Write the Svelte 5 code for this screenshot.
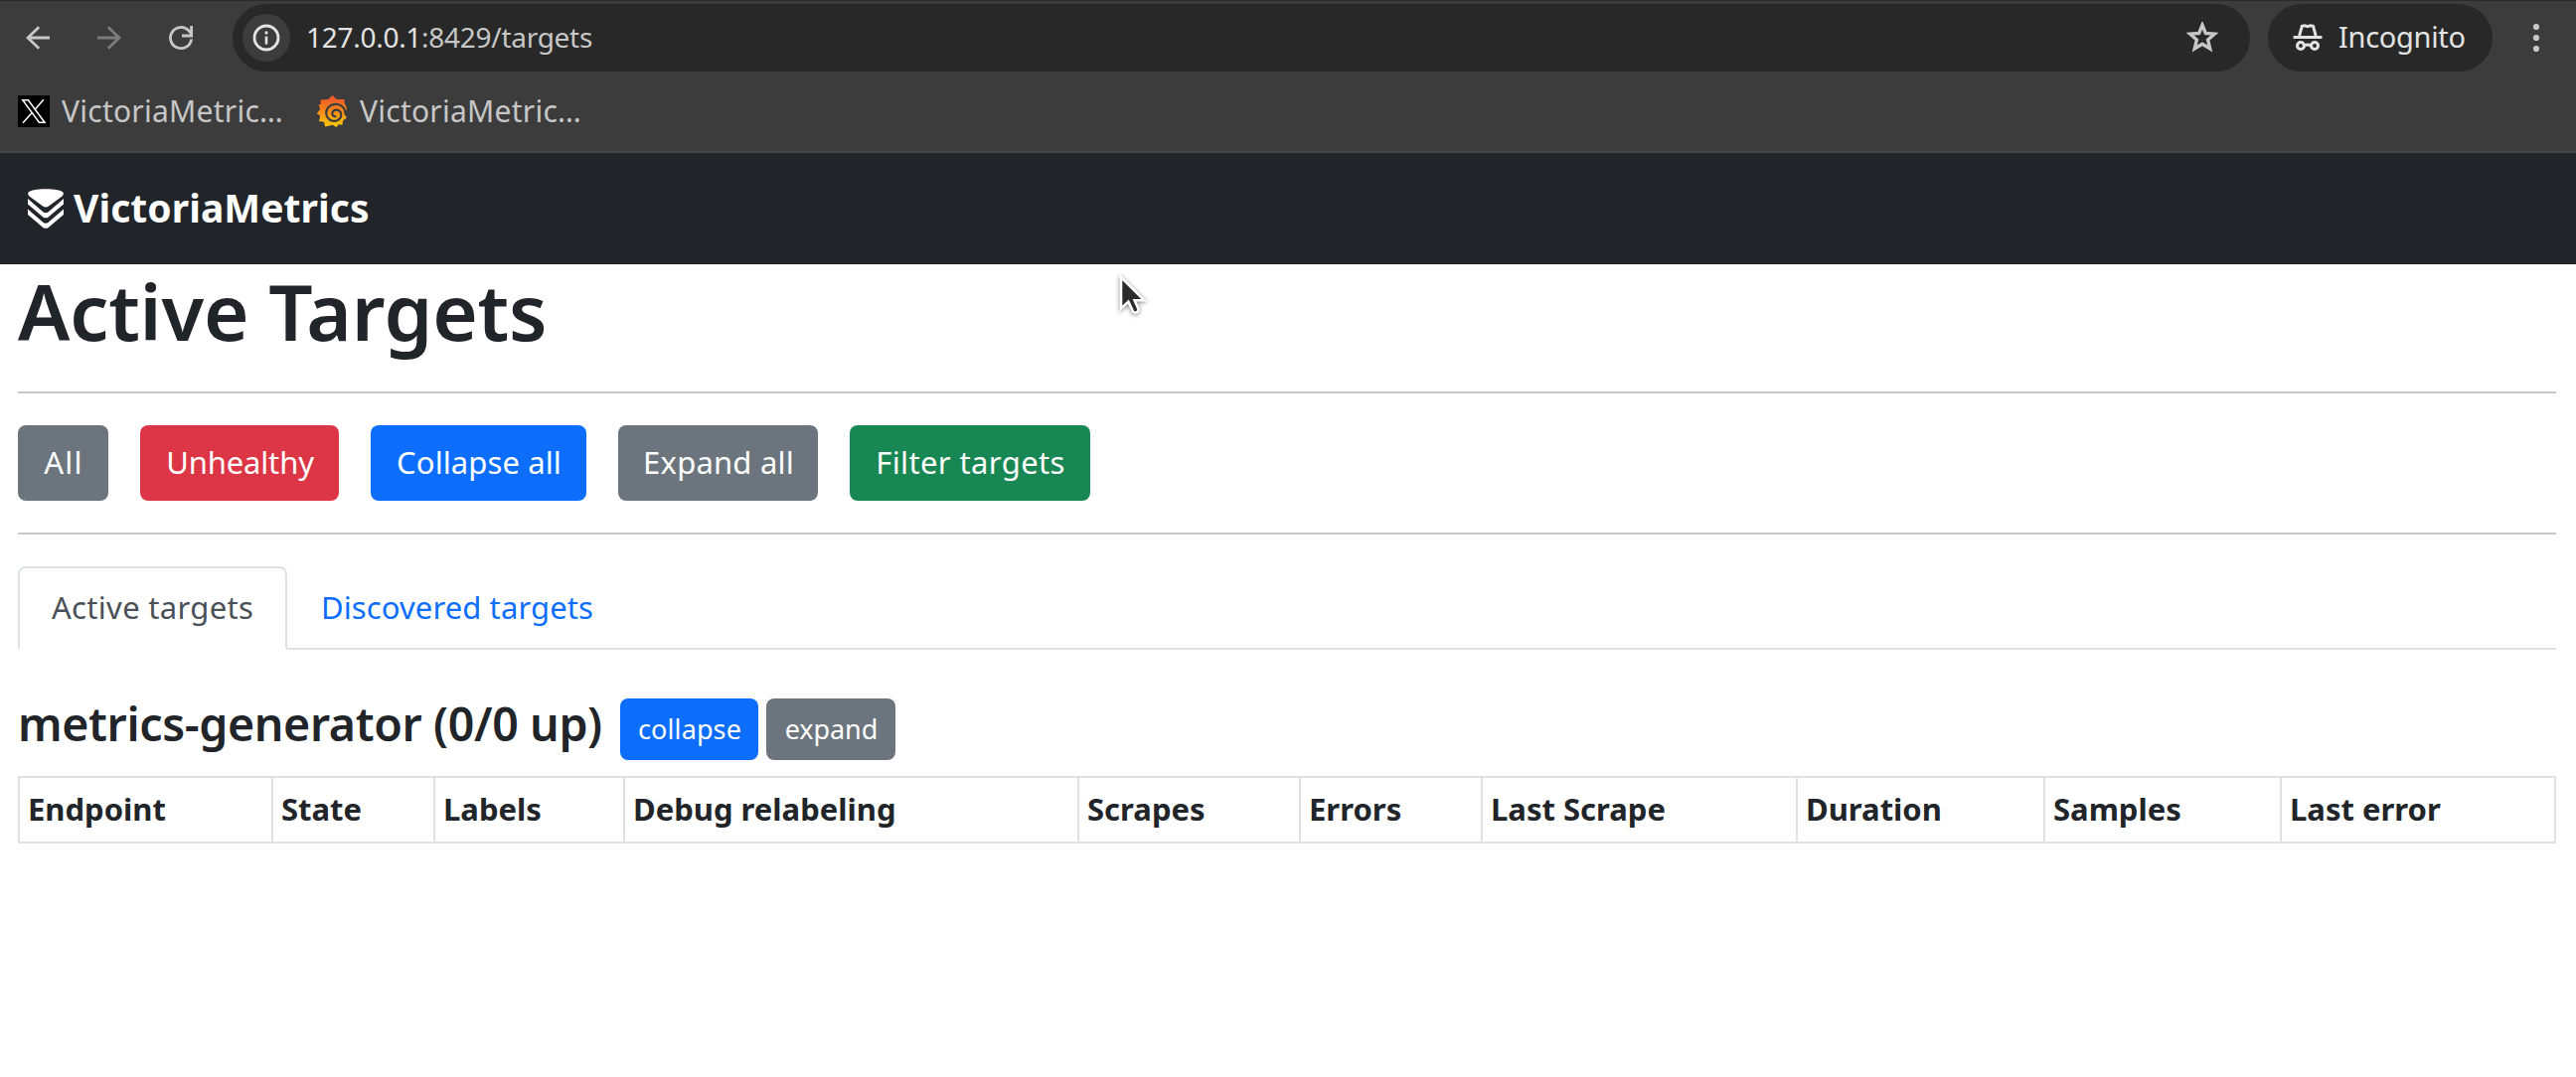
<script>
  const actions = [
    { label: 'All', kind: 'all' },
    { label: 'Unhealthy', kind: 'unhealthy' },
    { label: 'Collapse all', kind: 'collapse-all' },
    { label: 'Expand all', kind: 'expand-all' },
    { label: 'Filter targets', kind: 'filter' }
  ];

  const columns = [
    { name: 'Endpoint', width: 255 },
    { name: 'State', width: 163 },
    { name: 'Labels', width: 191 },
    { name: 'Debug relabeling', width: 457 },
    { name: 'Scrapes', width: 223 },
    { name: 'Errors', width: 183 },
    { name: 'Last Scrape', width: 317 },
    { name: 'Duration', width: 249 },
    { name: 'Samples', width: 238 },
    { name: 'Last error', width: 278 }
  ];

  let tab = $state('active');
</script>

<div class="window">
  <header class="chrome">
    <div class="toolbar">
      <svg class="nav-icon" viewBox="0 0 28 28"><path d="M26 14H4M15.2 3.2 4 14l11.2 10.8" /></svg>
      <svg class="nav-icon dim" viewBox="0 0 28 28"><path d="M2 14h22M12.8 3.2 24 14 12.8 24.8" /></svg>
      <svg class="nav-icon" viewBox="0 0 28 28"><path d="M24.6 15.3A10.6 10.6 0 1 1 21.6 6.6L24.8 10M24.6 2v10H15" /></svg>
      <div class="omnibox">
        <span class="site-info">
          <svg viewBox="0 0 28 28"><circle cx="14" cy="14" r="12" fill="none" stroke="#e3e3e3" stroke-width="2.8" /><path d="M14 12.6v8" stroke="#e3e3e3" stroke-width="2.6" /><circle cx="14" cy="8.9" r="1.6" fill="#e3e3e3" /></svg>
        </span>
        <span class="url"><b>127.0.0.1</b>:8429/targets</span>
        <svg class="star" viewBox="0 0 32 32"><path d="M16 3.2 19.3 11.4 28.4 12.2 21.6 18 23.7 26.9 16 22.2 8.3 26.9 10.4 18 3.6 12.2 12.7 11.4Z" /></svg>
      </div>
      <div class="incognito">
        <svg viewBox="0 0 30 30"><path d="M6.6 13 9.3 3.2 12 2.7 14.9 3.7 17.8 2.7 20.5 3.2 23.2 13M.6 14.4h28.8M12 22.9q3-1.6 6 0" /><circle cx="8" cy="23" r="3.5" /><circle cx="22" cy="23" r="3.5" /></svg>
        <span>Incognito</span>
      </div>
      <svg class="menu" viewBox="0 0 8 30"><circle cx="4" cy="4" r="3.1" /><circle cx="4" cy="15" r="3.1" /><circle cx="4" cy="26" r="3.1" /></svg>
    </div>
    <div class="bookmarks">
      <a href="#x" class="bookmark">
        <svg viewBox="0 0 32 32"><rect width="32" height="32" fill="#000" /><path d="M4.8 4.7h5.6L27 27.3h-5.6ZM25.8 4.2 17.4 13.9M13.9 17.8 5 27.8" fill="none" stroke="#fff" stroke-width="1.5" /></svg>
        <span>VictoriaMetric…</span>
      </a>
      <a href="#grafana" class="bookmark second">
        <svg viewBox="0 0 32 32">
          <defs><linearGradient id="flame" x1="0" y1="0" x2="0" y2="1"><stop offset="0.1" stop-color="#f05a28" /><stop offset="1" stop-color="#fbca0a" /></linearGradient></defs>
          <path fill="url(#flame)" d="M16.6 0 20.6 3.9 28.4 4 28.6 8Q31 11 31.2 15.4L28 13.8 28.4 19 31 22.5 27.2 25.3 26.4 29.8 22.4 29.2 20.8 32 16.6 29.8 9.2 31.6 8 26.7 3 25.9 4.2 20.6.8 18.2 4.1 14 2.6 9.2 4.8 9 4.4 4.4 12.2 4.1Z" />
          <path fill="none" stroke="#3c3c3c" stroke-width="2.2" d="M29.8 17C28.4 11.4 23.8 8.4 18.8 8.8 13.4 9.3 9.8 13.6 10.2 18.5 10.7 23.5 14.8 26.3 19.2 25.8 23.4 25.2 25.6 22 25.2 18.9 24.8 15.8 22.2 14.2 19.8 14.6 17.2 15 15.8 17.4 16.5 19.4 17.1 21 18.9 21.5 20.2 20.7" />
        </svg>
        <span>VictoriaMetric…</span>
      </a>
    </div>
  </header>

  <nav class="navbar">
    <svg viewBox="0 0 36 40"><path d="M.2 4.2C1.5-1.2 34.5-1.2 35.8 4.2 36 6 35 7 33.5 8.2L21 17.6Q18 19.4 15 17.6L2.5 8.2C1 7 0 6 .2 4.2ZM0 10 15.3 23.3Q18 25 20.7 23.3L36 10v5.6L20.7 28.4Q18 30.2 15.3 28.4L0 15.6ZM0 20.5 15.3 33.8Q18 35.5 20.7 33.8L36 20.5v5.6L20.7 38.9Q18 40.7 15.3 38.9L0 26.1Z" /></svg>
    <span>VictoriaMetrics</span>
  </nav>

  <main>
    <h1>Active Targets</h1>
    <hr />
    <div class="actions">
      {#each actions as action}
        <button class="btn {action.kind}">{action.label}</button>
      {/each}
    </div>
    <hr />
    <div class="tabs">
      <button class="tab first" class:selected={tab === 'active'} onclick={() => (tab = 'active')}>Active targets</button>
      <button class="tab" class:selected={tab === 'discovered'} onclick={() => (tab = 'discovered')}>Discovered targets</button>
    </div>
    <div class="job">
      <h4>metrics-generator (0/0 up)</h4>
      <button class="btn small collapse">collapse</button>
      <button class="btn small expand">expand</button>
    </div>
    <table>
      <colgroup>
        {#each columns as column}<col style="width: {column.width}px" />{/each}
      </colgroup>
      <thead>
        <tr>{#each columns as column}<th>{column.name}</th>{/each}</tr>
      </thead>
    </table>
  </main>

  <svg class="pointer" viewBox="0 0 36 48"><path d="M5 5V36.5L12.4 29.6 17 39.6Q19.4 42 22.4 39 22.9 37.6 22 36L18.6 28.2H28.2Z" /></svg>
</div>

<style>
  :global(body) {
    margin: 0;
    background: #fff;
  }

  .window {
    position: relative;
    width: 2592px;
    height: 1084px;
    overflow: hidden;
    background: #fff;
    color: #212529;
    font-family: 'Noto Sans', 'Open Sans', sans-serif;
    font-size: 31px;
  }

  .window * {
    box-sizing: border-box;
  }

  svg {
    display: block;
    flex: none;
  }

  span,
  h1,
  h4,
  button,
  th {
    white-space: nowrap;
  }

  .chrome {
    height: 154px;
    background: #3c3c3c;
    border-top: 1px solid #2b2b2b;
    border-bottom: 2px solid #444746;
  }

  .toolbar {
    display: flex;
    align-items: center;
    height: 68px;
    margin-top: 3px;
    padding-left: 24px;
  }

  .nav-icon {
    width: 28px;
    height: 28px;
    margin-right: 44px;
    fill: none;
    stroke: #c7c7c7;
    stroke-width: 2.8;
  }

  .nav-icon.dim {
    stroke: #7c7c7c;
  }

  .omnibox {
    display: flex;
    align-items: center;
    width: 2030px;
    height: 68px;
    margin-left: -6px;
    padding: 0 32px 0 10px;
    border-radius: 34px;
    background: #282828;
  }

  .site-info {
    display: flex;
    align-items: center;
    justify-content: center;
    width: 48px;
    height: 48px;
    border-radius: 50%;
    background: #3c3c3c;
  }

  .site-info svg {
    width: 28px;
    height: 28px;
  }

  .url {
    flex: 1;
    margin-left: 16px;
    padding-bottom: 2px;
    color: #c7c7c7;
    font-size: 28px;
    letter-spacing: -0.28px;
  }

  .url b {
    color: #e3e3e3;
    font-weight: 400;
  }

  .star {
    width: 32px;
    height: 32px;
    fill: none;
    stroke: #c7c7c7;
    stroke-width: 3.4;
  }

  .incognito {
    display: flex;
    align-items: center;
    width: 226px;
    height: 68px;
    margin-left: 18px;
    padding-left: 25px;
    border-radius: 34px;
    background: #282828;
    color: #e3e3e3;
    font-size: 29px;
    letter-spacing: -0.3px;
  }

  .incognito svg {
    width: 30px;
    height: 30px;
    fill: none;
    stroke: #e3e3e3;
    stroke-width: 3;
  }

  .incognito span {
    margin-left: 16px;
    padding-bottom: 3px;
  }

  .menu {
    width: 8px;
    height: 30px;
    margin-left: 40px;
    fill: #c7c7c7;
  }

  .bookmarks {
    display: flex;
    align-items: center;
    height: 80px;
    padding-left: 18px;
  }

  .bookmark {
    display: flex;
    align-items: center;
    gap: 12px;
    width: 300px;
    color: #c7c7c7;
    font-size: 30px;
    letter-spacing: 0.25px;
    line-height: 40px;
    text-decoration: none;
  }

  .bookmark svg {
    width: 32px;
    height: 32px;
  }

  .bookmark span {
    padding-bottom: 1px;
  }

  .navbar {
    display: flex;
    align-items: center;
    gap: 10px;
    height: 112px;
    padding-left: 28px;
    background: #212529;
    color: #fff;
    font-size: 39px;
    font-weight: 700;
    letter-spacing: 0.06px;
  }

  .navbar svg {
    width: 36px;
    height: 40px;
    fill: #fff;
  }

  .navbar span {
    padding-bottom: 3px;
  }

  main {
    padding: 0 20px 0 18px;
  }

  h1 {
    margin: 0;
    font-size: 78px;
    font-weight: 600;
    line-height: 94px;
    letter-spacing: -0.22px;
  }

  hr {
    height: 2px;
    margin: 32px 0;
    border: 0;
    background: #c8c9ca;
  }

  h1 + hr {
    margin-top: 34px;
  }

  button {
    margin: 0;
    font-family: inherit;
    text-align: center;
    cursor: pointer;
  }

  .actions {
    display: flex;
    gap: 32px;
  }

  .btn {
    height: 76px;
    padding: 0 0 2px 1px;
    border: 0;
    border-radius: 8px;
    color: #fff;
    font-size: 31px;
  }

  .all {
    width: 91px;
    background: #6c757d;
    letter-spacing: 1.2px;
  }

  .unhealthy {
    width: 200px;
    background: #dc3545;
    letter-spacing: -0.15px;
  }

  .collapse-all {
    width: 217px;
    background: #0d6efd;
    letter-spacing: 0.1px;
  }

  .expand-all {
    width: 201px;
    background: #6c757d;
    letter-spacing: 0.2px;
  }

  .filter {
    width: 242px;
    background: #198754;
    letter-spacing: 0.38px;
  }

  .tabs {
    display: flex;
    height: 84px;
    border-bottom: 2px solid #dee2e6;
  }

  .tab {
    height: 84px;
    padding: 0 32px 2px;
    border: 2px solid transparent;
    border-radius: 8px 8px 0 0;
    background: none;
    color: #0d6efd;
    font-size: 31px;
    letter-spacing: 0.1px;
  }

  .tab.first {
    width: 271px;
    letter-spacing: 0.31px;
  }

  .tab.selected {
    border-color: #dee2e6 #dee2e6 #fff;
    background: #fff;
    color: #495057;
  }

  .job {
    display: flex;
    gap: 8px;
    height: 62px;
    margin: 49px 0 16px;
  }

  h4 {
    width: 598px;
    margin: 0;
    font-size: 46.5px;
    font-weight: 600;
    line-height: 51px;
    letter-spacing: -0.37px;
  }

  .btn.small {
    height: 62px;
    font-size: 27px;
  }

  .collapse {
    width: 139px;
    background: #0d6efd;
    letter-spacing: 0.1px;
  }

  .expand {
    width: 130px;
    background: #6c757d;
    letter-spacing: -0.08px;
  }

  table {
    width: 2554px;
    table-layout: fixed;
    border-collapse: separate;
    border-spacing: 0;
  }

  th {
    height: 68px;
    padding: 0 0 2px 8px;
    border: solid #dee2e6;
    border-width: 2px 0 2px 2px;
    font-size: 31px;
    font-weight: 700;
    line-height: 42px;
    text-align: left;
    vertical-align: middle;
  }

  th:last-child {
    border-right-width: 2px;
  }

  .pointer {
    position: absolute;
    top: 274px;
    left: 1123px;
    width: 36px;
    height: 48px;
    fill: #2b2b2b;
    stroke: #fff;
    stroke-width: 2.6;
    filter: drop-shadow(0 1px 2px rgba(0, 0, 0, 0.5));
  }
</style>
